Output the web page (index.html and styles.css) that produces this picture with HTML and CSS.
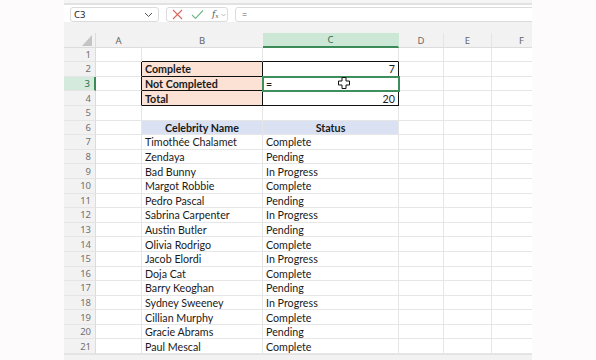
FILE: index.html
```html
<!DOCTYPE html>
<html>
<head>
<meta charset="utf-8">
<link rel="stylesheet" href="styles.css">
</head>
<body>
<div class="app">
  <div class="ribbon-edge"></div>
  <div class="toolbar">
    <div class="namebox">
      <span>C3</span>
      <svg class="chev" width="9" height="6" viewBox="0 0 9 6"><path d="M1 1l3.5 3.5L8 1" fill="none" stroke="#555" stroke-width="1"/></svg>
    </div>
    <div class="fbtns">
      <svg width="11" height="11" viewBox="0 0 11 11"><path d="M1 1l9 9M10 1l-9 9" stroke="#d9695f" stroke-width="1.1" fill="none"/></svg>
      <svg width="13" height="11" viewBox="0 0 13 11"><path d="M1 6l3.5 3.5L12 1.5" stroke="#6cb98a" stroke-width="1.1" fill="none"/></svg>
      <span class="fx">f<sub>x</sub></span>
      <svg class="chev2" width="5" height="4" viewBox="0 0 5 4"><path d="M0.5 1l2 2 2-2" fill="none" stroke="#aaa" stroke-width="0.8"/></svg>
    </div>
    <div class="formula">=</div>
  </div>
  <div class="band"></div>
  <div class="sheet">
    <div class="row head">
      <div class="corner"><svg width="10" height="11" viewBox="0 0 10 11"><polygon points="10,0 10,11 0,11" fill="#c4c4c4"/></svg></div>
      <div class="ch">A</div><div class="ch">B</div><div class="ch on">C</div><div class="ch">D</div><div class="ch">E</div><div class="ch">F</div>
    </div>
    <div class="row"><div class="rh">1</div><div class="c"></div><div class="c bt"></div><div class="c bt"></div><div class="c"></div><div class="c"></div><div class="c"></div></div>
    <div class="row"><div class="rh">2</div><div class="c bl"></div><div class="c bx peach b">Complete</div><div class="c bx r">7</div><div class="c"></div><div class="c"></div><div class="c"></div></div>
    <div class="row"><div class="rh on">3</div><div class="c bl"></div><div class="c bx peach b">Not Completed</div><div class="c bx sel">=<svg class="cursor" width="12" height="12" viewBox="0 0 12 12"><path d="M4 0.5h4v3.5h3.5v4h-3.5v3.5h-4v-3.5h-3.5v-4h3.5z" fill="#fff" stroke="#111" stroke-width="1"/></svg></div><div class="c"></div><div class="c"></div><div class="c"></div></div>
    <div class="row"><div class="rh">4</div><div class="c bl"></div><div class="c bx peach b">Total</div><div class="c bx r">20</div><div class="c"></div><div class="c"></div><div class="c"></div></div>
    <div class="row"><div class="rh">5</div><div class="c"></div><div class="c"></div><div class="c"></div><div class="c"></div><div class="c"></div><div class="c"></div></div>
    <div class="row"><div class="rh">6</div><div class="c"></div><div class="c blue b ctr">Celebrity Name</div><div class="c blue b ctr">Status</div><div class="c"></div><div class="c"></div><div class="c"></div></div>
    <div class="row"><div class="rh">7</div><div class="c"></div><div class="c">Timothée Chalamet</div><div class="c">Complete</div><div class="c"></div><div class="c"></div><div class="c"></div></div>
    <div class="row"><div class="rh">8</div><div class="c"></div><div class="c">Zendaya</div><div class="c">Pending</div><div class="c"></div><div class="c"></div><div class="c"></div></div>
    <div class="row"><div class="rh">9</div><div class="c"></div><div class="c">Bad Bunny</div><div class="c">In Progress</div><div class="c"></div><div class="c"></div><div class="c"></div></div>
    <div class="row"><div class="rh">10</div><div class="c"></div><div class="c">Margot Robbie</div><div class="c">Complete</div><div class="c"></div><div class="c"></div><div class="c"></div></div>
    <div class="row"><div class="rh">11</div><div class="c"></div><div class="c">Pedro Pascal</div><div class="c">Pending</div><div class="c"></div><div class="c"></div><div class="c"></div></div>
    <div class="row"><div class="rh">12</div><div class="c"></div><div class="c">Sabrina Carpenter</div><div class="c">In Progress</div><div class="c"></div><div class="c"></div><div class="c"></div></div>
    <div class="row"><div class="rh">13</div><div class="c"></div><div class="c">Austin Butler</div><div class="c">Pending</div><div class="c"></div><div class="c"></div><div class="c"></div></div>
    <div class="row"><div class="rh">14</div><div class="c"></div><div class="c">Olivia Rodrigo</div><div class="c">Complete</div><div class="c"></div><div class="c"></div><div class="c"></div></div>
    <div class="row"><div class="rh">15</div><div class="c"></div><div class="c">Jacob Elordi</div><div class="c">In Progress</div><div class="c"></div><div class="c"></div><div class="c"></div></div>
    <div class="row"><div class="rh">16</div><div class="c"></div><div class="c">Doja Cat</div><div class="c">Complete</div><div class="c"></div><div class="c"></div><div class="c"></div></div>
    <div class="row"><div class="rh">17</div><div class="c"></div><div class="c">Barry Keoghan</div><div class="c">Pending</div><div class="c"></div><div class="c"></div><div class="c"></div></div>
    <div class="row"><div class="rh">18</div><div class="c"></div><div class="c">Sydney Sweeney</div><div class="c">In Progress</div><div class="c"></div><div class="c"></div><div class="c"></div></div>
    <div class="row"><div class="rh">19</div><div class="c"></div><div class="c">Cillian Murphy</div><div class="c">Complete</div><div class="c"></div><div class="c"></div><div class="c"></div></div>
    <div class="row"><div class="rh">20</div><div class="c"></div><div class="c">Gracie Abrams</div><div class="c">Pending</div><div class="c"></div><div class="c"></div><div class="c"></div></div>
    <div class="row"><div class="rh">21</div><div class="c"></div><div class="c">Paul Mescal</div><div class="c">Complete</div><div class="c"></div><div class="c"></div><div class="c"></div></div>
  </div>
  <div class="hscroll"></div>
</div>
</body>
</html>
```

FILE: styles.css
```css
html, body {
  margin: 0;
  padding: 0;
  background: #fdfbfc;
}
body {
  width: 596px;
  height: 360px;
  overflow: hidden;
}
.app {
  margin-left: 64px;
  width: 468px;
  height: 360px;
  background: #ffffff;
  overflow: hidden;
  display: flex;
  flex-direction: column;
}
.ribbon-edge {
  height: 3px;
  flex: none;
  border-bottom: 2px solid #e3e2e3;
  background: #f6f5f6;
}
.toolbar {
  flex: none;
  display: flex;
  align-items: flex-start;
  padding: 2px 0 0 6px;
  gap: 7px;
  box-sizing: border-box;
  height: 17px;
}
.toolbar > div {
  height: 15px;
  box-sizing: border-box;
  border: 1px solid #dcdbdc;
  border-radius: 3px;
  background: #fff;
  display: flex;
  align-items: center;
}
.namebox {
  width: 89px;
  justify-content: space-between;
  padding: 0 5px 0 3px;
  font-family: "Noto Sans", sans-serif;
  font-size: 9.5px;
  color: #222;
}
.fbtns {
  width: 62px;
  padding: 0 0 0 5px;
  gap: 8px;
}
.fx {
  font-family: "DejaVu Serif", serif;
  font-style: italic;
  font-size: 9px;
  color: #555;
  line-height: 1;
}
.fx sub {
  font-size: 6px;
  vertical-align: -1px;
}
.chev2 { margin-left: -6px; }
.formula {
  flex: 1;
  margin-right: -10px;
  padding-left: 6px;
  font-family: "Noto Sans", sans-serif;
  font-size: 9px;
  color: #666;
}
.band {
  flex: none;
  height: 11px;
  background: #f3f2f3;
}
.sheet {
  flex: none;
  display: flex;
  flex-direction: column;
  font-family: Lato, sans-serif;
  font-size: 10.7px;
  color: #1a1a1a;
}
.row {
  display: grid;
  grid-template-columns: 32px 46px 121px 136px 45px 48px 60px;
  height: 14.6px;
}
.row > div {
  box-sizing: border-box;
  display: flex;
  align-items: center;
  white-space: nowrap;
  overflow: visible;
}
.head > div {
  background: #f3f2f3;
  border-bottom: 1px solid #dcdcdc;
  font-family: "Noto Sans", sans-serif;
  font-size: 9.5px;
  color: #666;
  justify-content: center;
}
.head .ch {
  border-right: 1px solid #e6e5e6;
}
.head .ch:nth-child(2), .head .ch:nth-child(3), .head .ch:nth-child(4) {
  border-right-color: transparent;
}
.head .corner {
  justify-content: flex-end;
  align-items: flex-end;
  padding: 0 3px 1px 0;
  border-right: 1px solid #dcdcdc;
}
.head .ch.on {
  background: #cde7d7;
  border-bottom: 2px solid #3b8a58;
  color: #2f6f47;
}
.rh {
  background: #f3f2f3;
  border-right: 1px solid #dcdcdc;
  border-bottom: 1px solid #e6e5e6;
  justify-content: flex-end;
  padding-right: 4px;
  font-family: "Noto Sans", sans-serif;
  font-size: 9.5px;
  color: #707070;
}
.rh.on {
  background: #d3eadc;
  border-right: 2px solid #3b8a58;
  color: #2f6f47;
}
.c {
  border-right: 1px solid #e6e6e6;
  border-bottom: 1px solid #e6e6e6;
  padding-left: 3px;
}
.c.bt { border-bottom-color: #111; }
.c.bl { border-right-color: #111; }
.c.bx { border-right-color: #111; border-bottom-color: #111; }
.peach { background: #fbe2d5; }
.blue { background: #d9e1f2; }
.b { font-weight: 700; }
.ctr { justify-content: center; padding-left: 0; }
.r { justify-content: flex-end; padding-right: 3px; }
.sel {
  position: relative;
  outline: 2px solid #3f8f5e;
  outline-offset: -1px;
}
.cursor {
  position: absolute;
  left: 75px;
  top: 0px;
}
.hscroll {
  flex: 1;
  background: #f3f2f3;
  border-top: 1px solid #e2e2e2;
}
```
